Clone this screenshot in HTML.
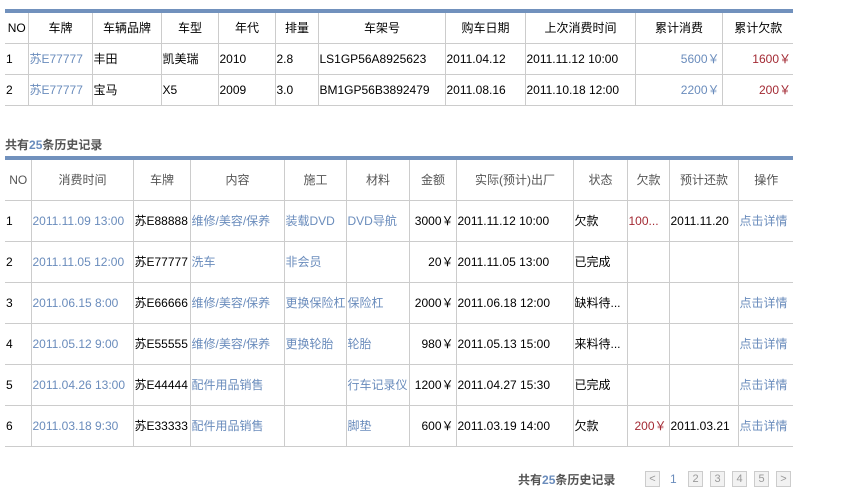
<!DOCTYPE html>
<html><head><meta charset="utf-8"><style>
body{margin:0;background:#fff;font-family:"Liberation Sans","Noto Sans CJK SC",sans-serif;font-size:12px;color:#000}
table{border-collapse:collapse;table-layout:fixed;position:absolute;left:5px;width:788px}
td,th{border:1px solid #ccc;padding:0 0 0 1px;white-space:nowrap;overflow:hidden;text-overflow:ellipsis;font-weight:normal;text-align:left}
tr:first-child th{border-top:none}
td:first-child,th:first-child{border-left:none}
td:last-child,th:last-child{border-right:none}
th{text-align:center}
.bar{position:absolute;left:5px;width:788px;height:4px;background:#7191bd}
a{color:#6a8cbc;text-decoration:none}
.r{text-align:right;padding-right:2px}
.red{color:#a32a34}
#t1 tr{height:31px}
#t1 tr.h{height:30px}
#t2 tr{height:41px}
#t2 tr.h{height:40px}
#t2 th{color:#555}
.title{position:absolute;left:5px;top:136px;font-weight:bold;color:#555;font-size:12px}
.title b,.pg b{color:#6a8cbc}
.pg{position:absolute;top:471px;left:518px;font-weight:bold;color:#555}
.btn{position:absolute;top:471px;width:13px;height:14px;border:1px solid #ccc;background:#f2f2f2;color:#999;font-size:11px;text-align:center;line-height:14px}
</style></head><body>
<div class="bar" style="top:9px"></div>
<table id="t1" style="top:13px">
<colgroup><col style="width:23px"><col style="width:64px"><col style="width:69px"><col style="width:57px"><col style="width:57px"><col style="width:43px"><col style="width:127px"><col style="width:80px"><col style="width:110px"><col style="width:87px"><col style="width:71px"></colgroup>
<tr class="h"><th>NO</th><th>车牌</th><th>车辆品牌</th><th>车型</th><th>年代</th><th>排量</th><th>车架号</th><th>购车日期</th><th>上次消费时间</th><th>累计消费</th><th>累计欠款</th></tr>
<tr><td>1</td><td><a>苏E77777</a></td><td>丰田</td><td>凯美瑞</td><td>2010</td><td>2.8</td><td>LS1GP56A8925623</td><td>2011.04.12</td><td>2011.11.12 10:00</td><td class="r"><a>5600￥</a></td><td class="r red">1600￥</td></tr>
<tr><td>2</td><td><a>苏E77777</a></td><td>宝马</td><td>X5</td><td>2009</td><td>3.0</td><td>BM1GP56B3892479</td><td>2011.08.16</td><td>2011.10.18 12:00</td><td class="r"><a>2200￥</a></td><td class="r red">200￥</td></tr>
</table>
<div class="title">共有<b>25</b>条历史记录</div>
<div class="bar" style="top:156px"></div>
<table id="t2" style="top:160px">
<colgroup><col style="width:26px"><col style="width:102px"><col style="width:57px"><col style="width:94px"><col style="width:62px"><col style="width:63px"><col style="width:47px"><col style="width:117px"><col style="width:54px"><col style="width:42px"><col style="width:69px"><col style="width:55px"></colgroup>
<tr class="h"><th>NO</th><th>消费时间</th><th>车牌</th><th>内容</th><th>施工</th><th>材料</th><th>金额</th><th>实际(预计)出厂</th><th>状态</th><th>欠款</th><th>预计还款</th><th>操作</th></tr>
<tr><td>1</td><td><a>2011.11.09 13:00</a></td><td>苏E88888</td><td><a>维修/美容/保养</a></td><td><a>装载DVD</a></td><td><a>DVD导航</a></td><td class="r">3000￥</td><td>2011.11.12 10:00</td><td>欠款</td><td class="red">100...</td><td>2011.11.20</td><td><a>点击详情</a></td></tr>
<tr><td>2</td><td><a>2011.11.05 12:00</a></td><td>苏E77777</td><td><a>洗车</a></td><td><a>非会员</a></td><td></td><td class="r">20￥</td><td>2011.11.05 13:00</td><td>已完成</td><td></td><td></td><td></td></tr>
<tr><td>3</td><td><a>2011.06.15 8:00</a></td><td>苏E66666</td><td><a>维修/美容/保养</a></td><td><a>更换保险杠</a></td><td><a>保险杠</a></td><td class="r">2000￥</td><td>2011.06.18 12:00</td><td>缺料待...</td><td></td><td></td><td><a>点击详情</a></td></tr>
<tr><td>4</td><td><a>2011.05.12 9:00</a></td><td>苏E55555</td><td><a>维修/美容/保养</a></td><td><a>更换轮胎</a></td><td><a>轮胎</a></td><td class="r">980￥</td><td>2011.05.13 15:00</td><td>来料待...</td><td></td><td></td><td><a>点击详情</a></td></tr>
<tr><td>5</td><td><a>2011.04.26 13:00</a></td><td>苏E44444</td><td><a>配件用品销售</a></td><td></td><td><a>行车记录仪</a></td><td class="r">1200￥</td><td>2011.04.27 15:30</td><td>已完成</td><td></td><td></td><td><a>点击详情</a></td></tr>
<tr><td>6</td><td><a>2011.03.18 9:30</a></td><td>苏E33333</td><td><a>配件用品销售</a></td><td></td><td><a>脚垫</a></td><td class="r">600￥</td><td>2011.03.19 14:00</td><td>欠款</td><td class="r red">200￥</td><td>2011.03.21</td><td><a>点击详情</a></td></tr>
</table>
<div class="pg">共有<b>25</b>条历史记录</div>
<div class="btn" style="left:645px">&lt;</div>
<div style="position:absolute;top:471px;left:670px;color:#6a8cbc;line-height:16px">1</div>
<div class="btn" style="left:688px">2</div>
<div class="btn" style="left:710px">3</div>
<div class="btn" style="left:732px">4</div>
<div class="btn" style="left:754px">5</div>
<div class="btn" style="left:776px">&gt;</div>
</body></html>
